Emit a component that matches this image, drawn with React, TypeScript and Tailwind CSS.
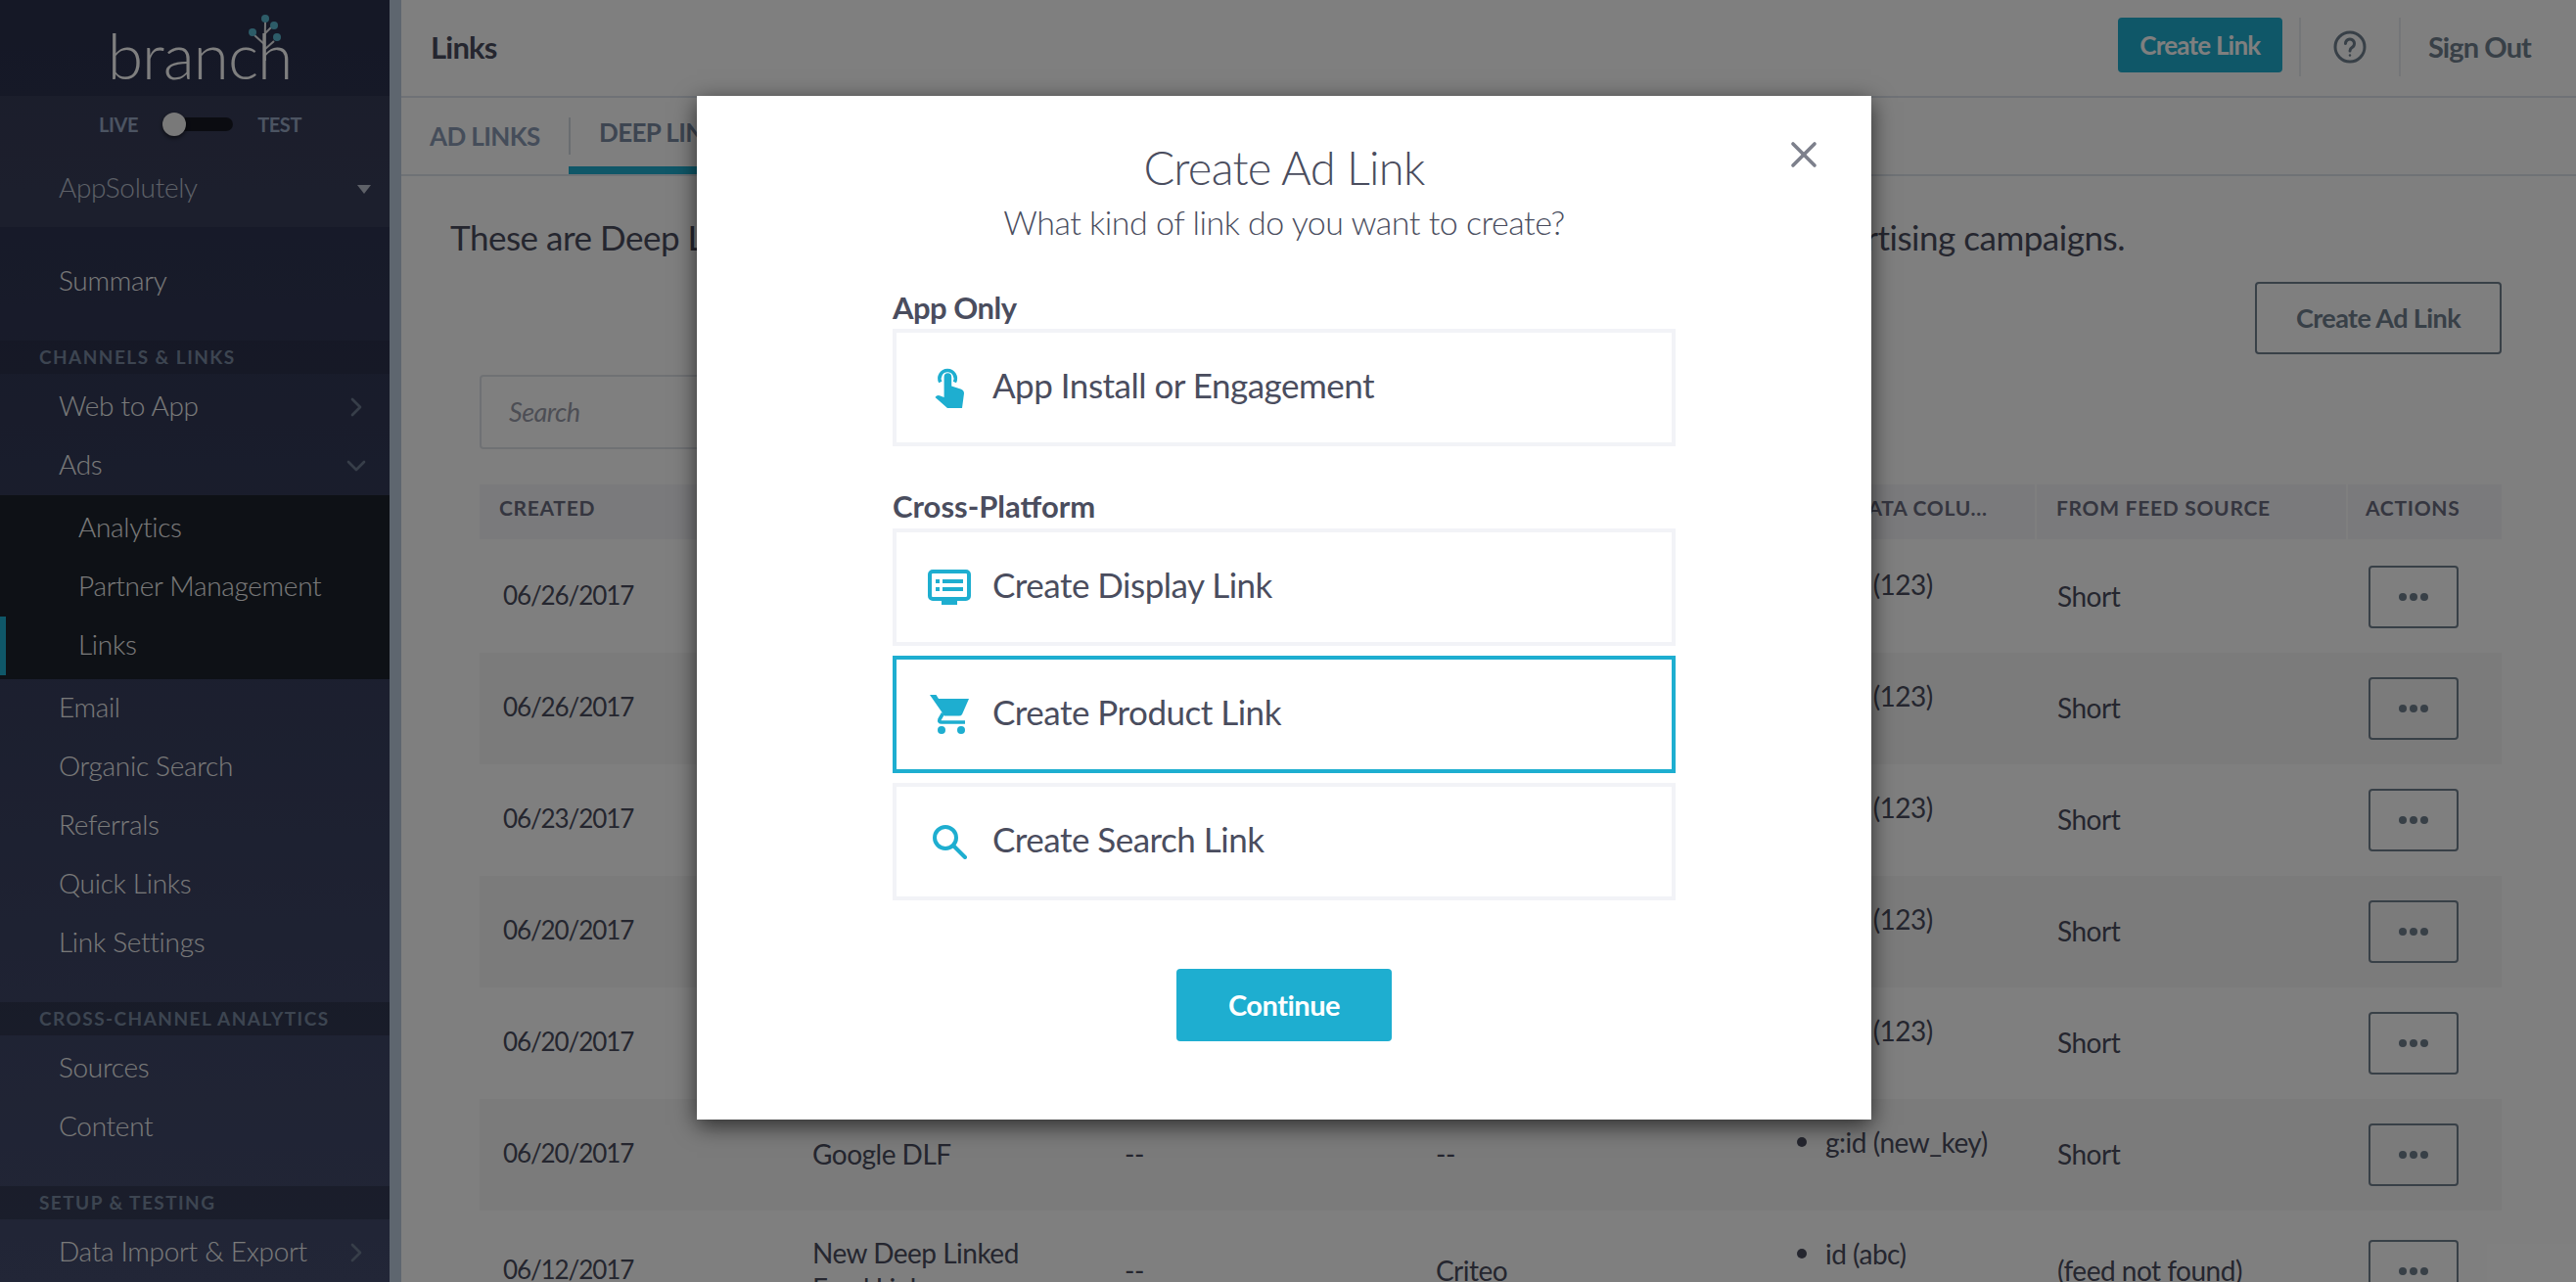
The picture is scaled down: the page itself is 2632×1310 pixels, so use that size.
import { ChevronRight, ChevronDown, X } from "lucide-react";

const channelLinks = ["Web to App", "Ads"];
const adLinks = ["Analytics", "Partner Management", "Links"];
const moreLinks = ["Email", "Organic Search", "Referrals", "Quick Links", "Link Settings"];

const rows = [
  { date: "06/26/2017", name: "", a: "", b: "", data: "g:id (123)", feed: "Short", h: "h-[114px]" },
  { date: "06/26/2017", name: "", a: "", b: "", data: "g:id (123)", feed: "Short", h: "h-[114px]", striped: true },
  { date: "06/23/2017", name: "", a: "", b: "", data: "g:id (123)", feed: "Short", h: "h-[114px]" },
  { date: "06/20/2017", name: "", a: "", b: "", data: "g:id (123)", feed: "Short", h: "h-[114px]", striped: true },
  { date: "06/20/2017", name: "", a: "", b: "", data: "g:id (123)", feed: "Short", h: "h-[114px]" },
  { date: "06/20/2017", name: "Google DLF", a: "--", b: "--", data: "g:id (new_key)", feed: "Short", h: "h-[114px]", striped: true },
  { date: "06/12/2017", name: "New Deep Linked\nFeed Links", a: "--", b: "Criteo", data: "id (abc)", feed: "(feed not found)", h: "h-[124px]" },
];

const gridCols = "grid grid-cols-[320px_319px_318px_369px_263px_318px_159px]";

function NavItem({ label, sub, icon }: { label: string; sub?: boolean; icon?: "right" | "down" }) {
  return (
    <div className={`flex h-[60px] shrink-0 items-center justify-between pr-[18px] text-[28px] font-light tracking-[-0.3px] text-[#f4f4f4] ${sub ? "pl-[80px]" : "pl-[60px]"}`}>
      <span className="mb-[5px]">{label}</span>
      {icon === "right" && <ChevronRight size={32} strokeWidth={2} className="text-[#6f7c92]" />}
      {icon === "down" && <ChevronDown size={32} strokeWidth={2} className="text-[#6f7c92]" />}
    </div>
  );
}

function SectionLabel({ label, className }: { label: string; className: string }) {
  return (
    <div className={`flex h-[34px] shrink-0 items-center pl-[40px] text-[19px] font-bold tracking-[1.45px] text-[#7a8ba3] ${className}`}>
      {label}
    </div>
  );
}

function Sidebar() {
  return (
    <aside className="flex h-full w-[398px] shrink-0 flex-col overflow-hidden bg-gradient-to-b from-[#2a304c] to-[#444c6e]">
      <div className="relative flex h-[98px] shrink-0 items-end justify-center pb-[9px] pl-[10px]">
        <span className="text-[66px] leading-none font-light tracking-[-1px] text-[#fff]">branch</span>
        <svg className="absolute left-[250px] top-[12px]" width="42" height="50" viewBox="0 0 42 50" fill="none">
          <path d="M21 50 C20 36 21 20 21 10 M21 34 L10 24 M21 38 L30 30 M21 22 L27 16" stroke="#fff" strokeWidth="2" opacity="0.9" />
          <circle cx="21" cy="7" r="4" fill="#5bb8d0" />
          <circle cx="8" cy="21" r="4" fill="#5bb8d0" />
          <circle cx="30" cy="14" r="4" fill="#5bb8d0" />
          <circle cx="33" cy="26" r="4" fill="#5bb8d0" />
        </svg>
      </div>
      <div className="flex h-[57px] shrink-0 items-center gap-[25px] bg-white/5 pl-[101px] text-[20px] font-bold tracking-[-0.4px] text-[#98a9c4]">
        <span>LIVE</span>
        <div className="relative h-[14px] w-[72px] rounded-full bg-black/60">
          <div className="absolute left-0 top-[-5px] h-[24px] w-[24px] rounded-full bg-[#f2f2f2] shadow-[0_2px_4px_rgba(0,0,0,0.6)]" />
        </div>
        <span>TEST</span>
      </div>
      <div className="flex h-[77px] shrink-0 items-center justify-between bg-white/5 pl-[60px] pr-[19px] text-[28px] font-light tracking-[-0.3px] text-[#bcc2d0]">
        <span className="mb-[5px]">AppSolutely</span>
        <div className="h-0 w-0 border-x-[7px] border-t-[9px] border-x-transparent border-t-[#bcc2d0]" />
      </div>

      <div className="mt-[26px]">
        <NavItem label="Summary" />
      </div>

      <SectionLabel label="CHANNELS & LINKS" className="mt-[30px] mb-[4px] bg-black/10" />
      {channelLinks.map((l) => (
        <NavItem key={l} label={l} icon={l === "Ads" ? "down" : "right"} />
      ))}
      <div className="relative h-[188px] shrink-0 bg-[#1c222c] py-[4px]">
        {adLinks.map((l) => (
          <NavItem key={l} label={l} sub />
        ))}
        <div className="absolute bottom-[4px] left-0 h-[60px] w-[6px] bg-[#1eaed0]" />
      </div>
      {moreLinks.map((l) => (
        <NavItem key={l} label={l} />
      ))}

      <SectionLabel label="CROSS-CHANNEL ANALYTICS" className="mt-[30px] mb-[4px] bg-black/20" />
      <NavItem label="Sources" />
      <NavItem label="Content" />

      <SectionLabel label="SETUP & TESTING" className="mt-[30px] mb-[4px] bg-black/20" />
      <NavItem label="Data Import & Export" icon="right" />
    </aside>
  );
}

function TopBar() {
  return (
    <header className="flex h-[100px] shrink-0 items-start justify-between border-b-2 border-[#dfe5ec] pl-[30px] pr-[46px]">
      <h1 className="mt-[29px] text-[31px] leading-[38px] font-bold tracking-[-0.8px] text-[#4a4d5e]">Links</h1>
      <div className="mt-[18px] flex items-start">
        <button className="flex h-[56px] w-[168px] items-center justify-center rounded-[4px] bg-[#1eaed0] text-[26px] font-bold tracking-[-0.8px] text-white">
          Create Link
        </button>
        <div className="ml-[17px] h-[60px] w-[2px] bg-[#e9ecf0]" />
        <div className="flex h-[60px] w-[100px] items-center justify-center">
          <svg width="34" height="34" viewBox="0 0 34 34" fill="none" stroke="#71808f" strokeWidth="3">
            <circle cx="17" cy="17" r="15" />
            <path d="M12.5 13.5 a4.5 4.5 0 1 1 6.8 3.9 c-1.5 .9 -2.3 1.8 -2.3 3.6" strokeLinecap="round" />
            <circle cx="17" cy="25.5" r="1.2" fill="#71808f" stroke="none" />
          </svg>
        </div>
        <div className="h-[60px] w-[2px] bg-[#e9ecf0]" />
        <span className="ml-[28px] mt-[10px] text-[29px] leading-[40px] font-bold tracking-[-0.9px] text-[#71808f]">Sign Out</span>
      </div>
    </header>
  );
}

function Tabs() {
  return (
    <nav className="flex h-[80px] shrink-0 border-b-2 border-[#dfe5ec] pl-[29px] text-[26px] font-bold tracking-[-0.6px]">
      <div className="flex h-[78px] w-[142px] items-center text-[#8a9ab4]">AD LINKS</div>
      <div className="relative flex h-[78px] w-[300px] items-center border-b-[8px] border-[#1eaed0] pl-[31px] text-[#7a8ba3]">
        <div className="absolute left-0 top-[20px] h-[38px] w-[2px] bg-[#d4dae2]" />
        DEEP LINKS
      </div>
    </nav>
  );
}

function FeedTable() {
  const heads = ["CREATED", "NAME", "AD PARTNER", "FEED TYPE", "LINK DATA COLU...", "FROM FEED SOURCE", "ACTIONS"];
  return (
    <div className="mt-[36px] ml-[80px] w-[2066px] shrink-0">
      <div className={`${gridCols} h-[56px] bg-[#f4f4f8] text-[21px] font-bold tracking-[0.7px] text-[#6a6d80]`}>
        {heads.map((h, i) => (
          <div key={h} className={`flex items-center pb-[9px] ${i === 6 ? "pl-[18px]" : "pl-[20px]"} ${i >= 5 ? "border-l-2 border-white" : ""}`}>
            {h}
          </div>
        ))}
      </div>
      <div className="mt-[2px]">
        {rows.map((r, i) => (
          <div key={i} className={`${gridCols} ${r.h} text-[28px] tracking-[-0.5px] text-[#4a4d5e] ${r.striped ? "bg-[#f7f7f7]" : ""}`}>
            <div className="flex items-center pb-[3px] pl-[24px] text-[26px] tracking-[-1.1px]">{r.date}</div>
            <div className="flex items-center pb-[3px] pl-[20px] leading-[36px]">
              <span className="whitespace-pre-line">{r.name}</span>
            </div>
            <div className="flex items-center pb-[3px] pl-[20px]">{r.a}</div>
            <div className="flex items-center pb-[3px] pl-[20px]">{r.b}</div>
            <div className="pl-[20px] pt-[26px] leading-[36px]">
              <ul className="flex items-center gap-[19px]">
                <li className="h-[10px] w-[10px] rounded-full bg-[#4a4d5e]" />
                <li>{r.data}</li>
              </ul>
            </div>
            <div className="flex items-center pb-[3px] pl-[23px]">{r.feed}</div>
            <div className="flex items-center pl-[23px]">
              <button className="flex h-[64px] w-[92px] items-center justify-center gap-[3px] rounded-[4px] border-2 border-[#71808f]">
                <span className="h-[8px] w-[8px] rounded-full bg-[#71808f]" />
                <span className="h-[8px] w-[8px] rounded-full bg-[#71808f]" />
                <span className="h-[8px] w-[8px] rounded-full bg-[#71808f]" />
              </button>
            </div>
          </div>
        ))}
      </div>
    </div>
  );
}

function MainContent() {
  return (
    <main className="flex min-w-0 flex-1 flex-col overflow-hidden bg-white">
      <TopBar />
      <Tabs />
      <p className="ml-[50px] mt-[40px] shrink-0 whitespace-nowrap text-[35px] leading-[44px] tracking-[-0.48px] text-[#4a4d5e]">
        These are Deep Links that are available for you to use in your Facebook and Google dynamic advertising campaigns.
      </p>
      <div className="mt-[24px] flex shrink-0 justify-end pr-[76px]">
        <button className="flex h-[74px] w-[252px] items-center justify-center rounded-[4px] border-2 border-[#71808f] text-[27px] font-bold tracking-[-0.6px] text-[#71808f]">
          Create Ad Link
        </button>
      </div>
      <div className="ml-[80px] mt-[21px] flex h-[76px] w-[600px] shrink-0 items-center rounded-[4px] border-2 border-[#dfe3e8] pl-[28px] text-[27px] italic tracking-[-0.5px] text-[#9a9daa]">
        Search
      </div>
      <FeedTable />
    </main>
  );
}

function HandIcon() {
  return (
    <svg width="30" height="42" viewBox="0 0 30 42" fill="#1eaed0">
      <path d="M5.8 15.5 A8.2 8.2 0 1 1 20.4 15.5" fill="none" stroke="#1eaed0" strokeWidth="3.6" />
      <path d="M9.6 10 a3.8 3.8 0 0 1 7.6 0 V19.5 L26.5 22.5 Q30 23.5 30 27 L28 42 H13 L0.5 31 Q2 28.5 5 29.2 L9.6 31 Z" />
    </svg>
  );
}

function DisplayIcon() {
  return (
    <svg width="44" height="36" viewBox="0 0 44 36" fill="#1eaed0">
      <rect x="2" y="2" width="40" height="28" rx="3" fill="none" stroke="#1eaed0" strokeWidth="4" />
      <rect x="14" y="31" width="16" height="5" />
      <rect x="8" y="10" width="4" height="4" />
      <rect x="15" y="10" width="21" height="4" />
      <rect x="8" y="18" width="4" height="4" />
      <rect x="15" y="18" width="21" height="4" />
    </svg>
  );
}

function CartIcon() {
  return (
    <svg width="40" height="40" viewBox="0 0 40 40" fill="#1eaed0">
      <path d="M0 0 H6.5 L9 4 H40 L33 20 Q32 21.5 30 21.5 H15 Z" />
      <path d="M13.5 19 L10 25 Q9 28 12 28 H36" fill="none" stroke="#1eaed0" strokeWidth="3.6" />
      <circle cx="12" cy="36" r="4" />
      <circle cx="32" cy="36" r="4" />
    </svg>
  );
}

function SearchIcon() {
  return (
    <svg width="36" height="36" viewBox="0 0 36 36" fill="none" stroke="#1eaed0" strokeWidth="4">
      <circle cx="14" cy="14" r="11" />
      <path d="M22 22 L34 34" strokeLinecap="round" />
    </svg>
  );
}

function LinkOption({ label, icon, selected, className }: { label: string; icon: React.ReactNode; selected?: boolean; className?: string }) {
  return (
    <div className={`flex h-[120px] items-center border-4 bg-white ${selected ? "border-[#1eaed0]" : "border-[#f2f3f7]"} ${className ?? ""}`}>
      <div className="flex w-[98px] shrink-0 justify-center pl-[14px] pr-[4px]">{icon}</div>
      <span className="mb-[6px] text-[35px] tracking-[-0.5px] text-[#4a4d5e]">{label}</span>
    </div>
  );
}

function CreateAdLinkModal() {
  return (
    <div className="absolute left-[712px] top-[98px] flex h-[1046px] w-[1200px] flex-col items-center bg-white shadow-[0_6px_22px_rgba(0,0,0,0.65)]">
      <X size={44} strokeWidth={2} className="absolute right-[47px] top-[38px] text-[#7d808c]" />
      <h2 className="mt-[49px] text-[47px] leading-[48px] font-light tracking-[-0.7px] text-[#4a4d5e]">Create Ad Link</h2>
      <p className="mt-[12px] text-[34px] leading-[40px] font-light tracking-[-0.5px] text-[#4a4d5e]">What kind of link do you want to create?</p>
      <div className="mt-[45px] w-[800px]">
        <div className="text-[31px] leading-[44px] font-bold tracking-[-0.5px] text-[#4a4d5e]">App Only</div>
        <LinkOption label="App Install or Engagement" icon={<HandIcon />} />
        <div className="mt-[38px] text-[31px] leading-[46px] font-bold text-[#4a4d5e]">Cross-Platform</div>
        <LinkOption label="Create Display Link" icon={<DisplayIcon />} />
        <LinkOption label="Create Product Link" icon={<CartIcon />} selected className="mt-[10px]" />
        <LinkOption label="Create Search Link" icon={<SearchIcon />} className="mt-[10px]" />
      </div>
      <button className="mt-[70px] flex h-[74px] w-[220px] items-center justify-center rounded-[4px] bg-[#1eaed0] text-[29px] font-bold tracking-[-0.5px] text-white">
        Continue
      </button>
    </div>
  );
}

export default function App() {
  return (
    <div className="relative flex h-[1310px] w-[2632px] overflow-hidden font-['Lato',sans-serif]">
      <Sidebar />
      <div className="w-[12px] shrink-0 bg-[#bcccdf]" />
      <MainContent />
      {/* Dimmed backdrop behind the dialog */}
      <div className="absolute inset-0 bg-black/50" />
      <CreateAdLinkModal />
    </div>
  );
}
